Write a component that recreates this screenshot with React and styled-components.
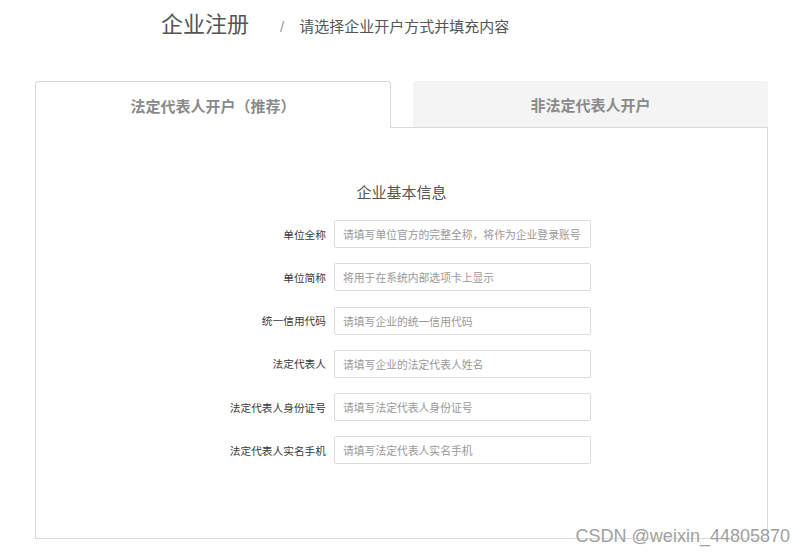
import React, { useState } from 'react';
import styled, { createGlobalStyle } from 'styled-components';

const GlobalStyle = createGlobalStyle`
  html, body {
    margin: 0;
    padding: 0;
    background: #fff;
    font-family: "Noto Sans CJK SC", "Noto Sans", "Liberation Sans", sans-serif;
  }
  * { box-sizing: border-box; }
`;

const Page = styled.div`
  position: relative;
  width: 810px;
  height: 555px;
  overflow: hidden;
`;

const Header = styled.div`
  display: flex;
  align-items: baseline;
  padding: 8px 0 0 161px;
  height: 36px;
`;

const Heading = styled.h1`
  margin: 0;
  font-size: 22px;
  line-height: 28px;
  font-weight: 400;
  color: #555;
`;

const Slash = styled.span`
  margin: 0 15px 0 31px;
  font-size: 15px;
  color: #999;
  font-family: "Liberation Sans", sans-serif;
`;

const Subtitle = styled.span`
  font-size: 15px;
  color: #555;
`;

const Panel = styled.div`
  margin: 45px 42px 0 35px;
`;

const TabBar = styled.div`
  display: flex;
  height: 47px;
`;

const Tab = styled.button`
  flex: 0 0 ${p => p.$width}px;
  display: flex;
  align-items: center;
  justify-content: center;
  padding: 0;
  font-family: inherit;
  font-size: 15px;
  font-weight: 700;
  color: #8a8a8a;
  cursor: pointer;
  background: ${p => (p.$active ? '#fff' : '#f4f4f4')};
  border: ${p => (p.$active ? '1px solid #d9d9d9' : 'none')};
  border-bottom: ${p => (p.$active ? 'none' : '1px solid #d9d9d9')};
  border-radius: 3px 3px 0 0;
`;

const TabGap = styled.div`
  flex: 1;
  border-bottom: 1px solid #d9d9d9;
`;

const Body = styled.div`
  height: 411px;
  border: 1px solid #d9d9d9;
  border-top: none;
  padding-top: 52px;
`;

const SectionTitle = styled.h2`
  margin: 0 0 16px;
  text-align: center;
  font-size: 15px;
  line-height: 24px;
  font-weight: 400;
  color: #555;
`;

const Form = styled.div`
  display: grid;
  grid-template-columns: 114px 257px;
  justify-content: center;
  column-gap: 8px;
  row-gap: 15.3px;
  align-items: center;
`;

const Label = styled.label`
  text-align: right;
  font-size: 10.7px;
  color: #3a3a3a;
  white-space: nowrap;
`;

const Input = styled.input`
  width: 257px;
  height: 28px;
  border: 1px solid #dcdcdc;
  border-radius: 2px;
  padding: 0 6px 0 8px;
  font-family: inherit;
  font-size: 10.8px;
  color: #333;
  outline: none;

  &::placeholder {
    color: #999;
  }
`;

const Watermark = styled.div`
  position: absolute;
  right: 20px;
  bottom: 8px;
  font-family: "Liberation Sans", Arial, sans-serif;
  font-size: 18px;
  color: #a0a0a0;
  text-shadow: 0 0 2px #fff;
`;

const fields = [
  { label: '单位全称', placeholder: '请填写单位官方的完整全称，将作为企业登录账号' },
  { label: '单位简称', placeholder: '将用于在系统内部选项卡上显示' },
  { label: '统一信用代码', placeholder: '请填写企业的统一信用代码' },
  { label: '法定代表人', placeholder: '请填写企业的法定代表人姓名' },
  { label: '法定代表人身份证号', placeholder: '请填写法定代表人身份证号' },
  { label: '法定代表人实名手机', placeholder: '请填写法定代表人实名手机' },
];

export default function App() {
  const [tab, setTab] = useState('legal');

  return (
    <Page>
      <GlobalStyle />
      <Header>
        <Heading>企业注册</Heading>
        <Slash>/</Slash>
        <Subtitle>请选择企业开户方式并填充内容</Subtitle>
      </Header>

      <Panel>
        <TabBar>
          <Tab $width={356} $active={tab === 'legal'} onClick={() => setTab('legal')}>
            法定代表人开户（推荐）
          </Tab>
          <TabGap />
          <Tab $width={355} $active={tab === 'other'} onClick={() => setTab('other')}>
            非法定代表人开户
          </Tab>
        </TabBar>
        <Body>
          <SectionTitle>企业基本信息</SectionTitle>
          <Form>
            {fields.map(f => (
              <React.Fragment key={f.label}>
                <Label>{f.label}</Label>
                <Input placeholder={f.placeholder} />
              </React.Fragment>
            ))}
          </Form>
        </Body>
      </Panel>

      <Watermark>CSDN @weixin_44805870</Watermark>
    </Page>
  );
}
